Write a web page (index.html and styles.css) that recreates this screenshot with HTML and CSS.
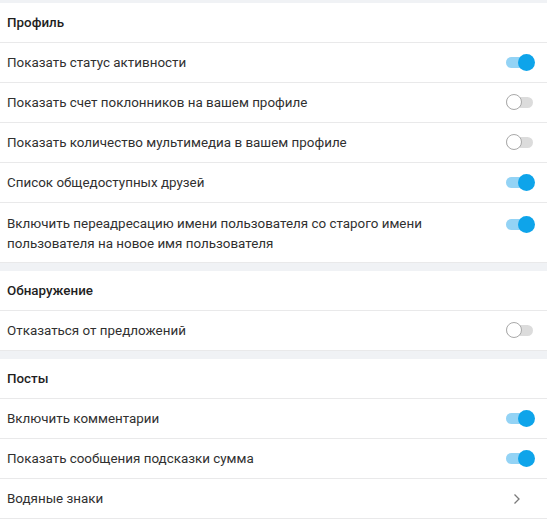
FILE: index.html
```html
<!DOCTYPE html>
<html lang="ru">
<head>
<meta charset="utf-8">
<link rel="stylesheet" href="styles.css">
</head>
<body>
<div class="page">
  <div class="strip"></div>
  <section class="section">
    <div class="row header">Профиль</div>
    <div class="row"><span class="label">Показать статус активности</span><span class="toggle on"></span></div>
    <div class="row"><span class="label">Показать счет поклонников на вашем профиле</span><span class="toggle"></span></div>
    <div class="row"><span class="label">Показать количество мультимедиа в вашем профиле</span><span class="toggle"></span></div>
    <div class="row"><span class="label">Список общедоступных друзей</span><span class="toggle on"></span></div>
    <div class="row tall"><span class="label">Включить переадресацию имени пользователя со старого имени пользователя на новое имя пользователя</span><span class="toggle on"></span></div>
  </section>
  <div class="gap"></div>
  <section class="section">
    <div class="row header">Обнаружение</div>
    <div class="row"><span class="label">Отказаться от предложений</span><span class="toggle"></span></div>
  </section>
  <div class="gap"></div>
  <section class="section">
    <div class="row header">Посты</div>
    <div class="row"><span class="label">Включить комментарии</span><span class="toggle on"></span></div>
    <div class="row"><span class="label">Показать сообщения подсказки сумма</span><span class="toggle on"></span></div>
    <div class="row"><span class="label">Водяные знаки</span><svg class="chev" width="8" height="12" viewBox="0 0 8 12"><path d="M1.5 1.5 L6 6 L1.5 10.5" fill="none" stroke="#7a7a7a" stroke-width="1.3"/></svg></div>
  </section>
</div>
</body>
</html>
```
FILE: styles.css
```css
html, body {
  margin: 0;
  padding: 0;
  background: #ffffff;
}
.page {
  font-family: Roboto, "Noto Sans", Arial, sans-serif;
  font-size: 13.4px;
  color: #303030;
  width: 547px;
}
.strip {
  height: 3px;
  background: #f0f2f5;
}
.gap {
  height: 8px;
  background: #f0f2f5;
}
.row {
  box-sizing: border-box;
  height: 40px;
  border-bottom: 1px solid #e9e9ea;
  display: flex;
  align-items: center;
  justify-content: space-between;
  padding: 0 12px 0 7px;
}
.row.tall {
  height: 60px;
  align-items: flex-start;
  padding-top: 11px;
}
.row.tall .label {
  line-height: 20px;
  width: 450px;
}
.row.tall .toggle {
  margin-top: 2px;
}
.header {
  font-weight: 500;
  color: #1f1f1f;
}
.label {
  line-height: 20px;
}
.toggle {
  position: relative;
  width: 29px;
  height: 17px;
  flex: none;
}
.toggle::before {
  content: "";
  position: absolute;
  left: 0;
  top: 3px;
  width: 27px;
  height: 11px;
  border-radius: 6px;
  background: #dcdcdc;
}
.toggle::after {
  content: "";
  position: absolute;
  left: 0;
  top: 0;
  width: 14px;
  height: 14px;
  border-radius: 50%;
  background: #ffffff;
  border: 1.5px solid #a9a9a9;
}
.toggle.on::before {
  background: #93d3f5;
}
.toggle.on::after {
  left: 12px;
  width: 17px;
  height: 17px;
  border: none;
  background: #0ea4ea;
}
.chev {
  margin-right: 14px;
}
```
